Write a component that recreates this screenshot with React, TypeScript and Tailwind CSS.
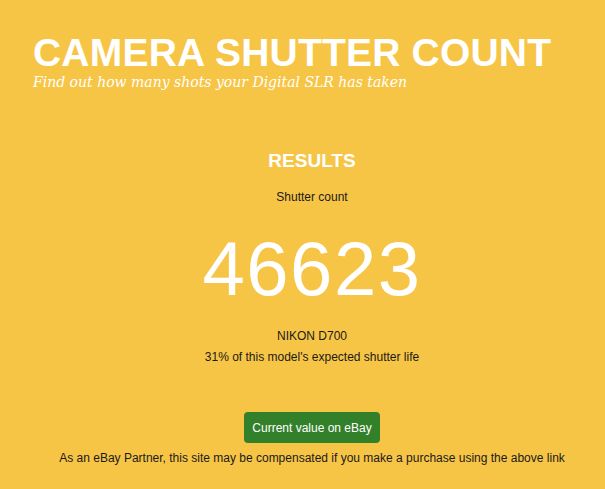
import React from "react";

const App = () => {
  return (
    <div className="min-h-screen w-full bg-[#f7c546] font-['Liberation_Sans',Arial,sans-serif]">
      <div className="ml-[33px] w-[558px] pt-[33px]">
        <h1 className="text-[39px] leading-[40px] text-white font-bold tracking-[0.2px]">
          CAMERA SHUTTER COUNT
        </h1>
        <p className="font-['DejaVu_Serif',Georgia,serif] italic text-[14px] leading-[18px] text-white">
          Find out how many shots your Digital SLR has taken
        </p>

        <div className="flex flex-col items-center text-center pt-[58px]">
          <h2 className="text-[19px] leading-[24px] font-bold text-white">RESULTS</h2>
          <p className="mt-[16px] text-[12px] leading-[16px] text-[#1a1a1a]">Shutter count</p>
          <div className="mt-[24px] text-[76px] leading-[80px] text-white tracking-[1.5px]">46623</div>
          <p className="mt-[19px] text-[12px] leading-[16px] text-[#1a1a1a]">NIKON D700</p>
          <p className="mt-[5px] text-[12px] leading-[16px] text-[#1a1a1a]">
            31% of this model's expected shutter life
          </p>
          <button className="mt-[47px] h-[31px] w-[136px] rounded-[4px] bg-[#33802b] text-[12px] text-white">
            Current value on eBay
          </button>
          <p className="mt-[7px] text-[12px] leading-[16px] text-[#1a1a1a]">
            As an eBay Partner, this site may be compensated if you make a purchase using the above link
          </p>
        </div>
      </div>
    </div>
  );
};

export default App;
